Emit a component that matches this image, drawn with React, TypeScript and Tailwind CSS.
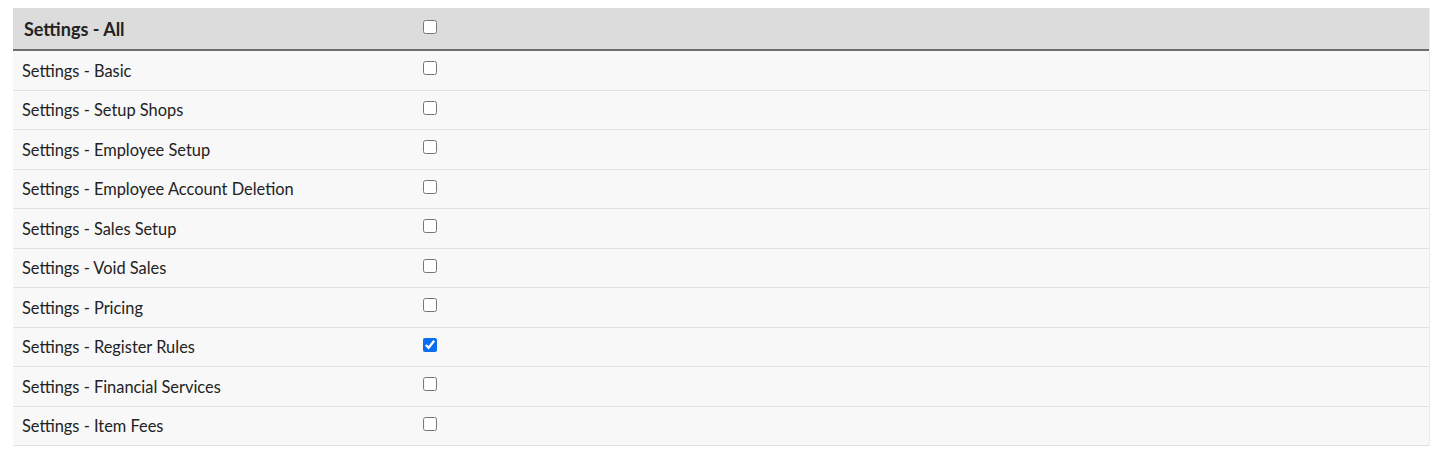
import { useState } from 'react'

const permissions = [
  { label: 'Settings - Basic', checked: false },
  { label: 'Settings - Setup Shops', checked: false },
  { label: 'Settings - Employee Setup', checked: false },
  { label: 'Settings - Employee Account Deletion', checked: false },
  { label: 'Settings - Sales Setup', checked: false },
  { label: 'Settings - Void Sales', checked: false },
  { label: 'Settings - Pricing', checked: false },
  { label: 'Settings - Register Rules', checked: true },
  { label: 'Settings - Financial Services', checked: false },
  { label: 'Settings - Item Fees', checked: false },
]

export default function App() {
  const [values, setValues] = useState(permissions.map((p) => p.checked))
  const allChecked = values.every(Boolean)

  return (
    <div className="min-h-[455px] bg-white pl-[13px] pr-[10px] pt-[8px] font-['Lato','Noto_Sans',sans-serif] text-[#222]">
      <div className="border-r border-[#ececec]">
        <div className="flex h-[43px] items-center border-b-2 border-[#6e6e6e] bg-[#dcdcdc]">
          <div className="w-[397px] pl-[11px] pt-[2px] text-[18px] font-bold">Settings - All</div>
          <div className="flex items-center pl-[13px]">
            <input
              type="checkbox"
              checked={allChecked}
              onChange={(e) => setValues(values.map(() => e.target.checked))}
              className="m-0 mb-[3px] h-[14px] w-[14px] accent-[#0a6cf0]"
            />
          </div>
        </div>
        {permissions.map((p, i) => (
          <div
            key={p.label}
            className="flex h-[39.5px] items-center border-b border-[#e2e2e2] bg-[#f8f8f8]"
          >
            <div className="w-[397px] pl-[9px] pt-[2px] text-[16.4px]">{p.label}</div>
            <div className="flex items-center pl-[13px]">
              <input
                type="checkbox"
                checked={values[i]}
                onChange={(e) => {
                  const next = [...values]
                  next[i] = e.target.checked
                  setValues(next)
                }}
                className="m-0 mb-[4px] h-[14px] w-[14px] accent-[#0a6cf0]"
              />
            </div>
          </div>
        ))}
      </div>
    </div>
  )
}
